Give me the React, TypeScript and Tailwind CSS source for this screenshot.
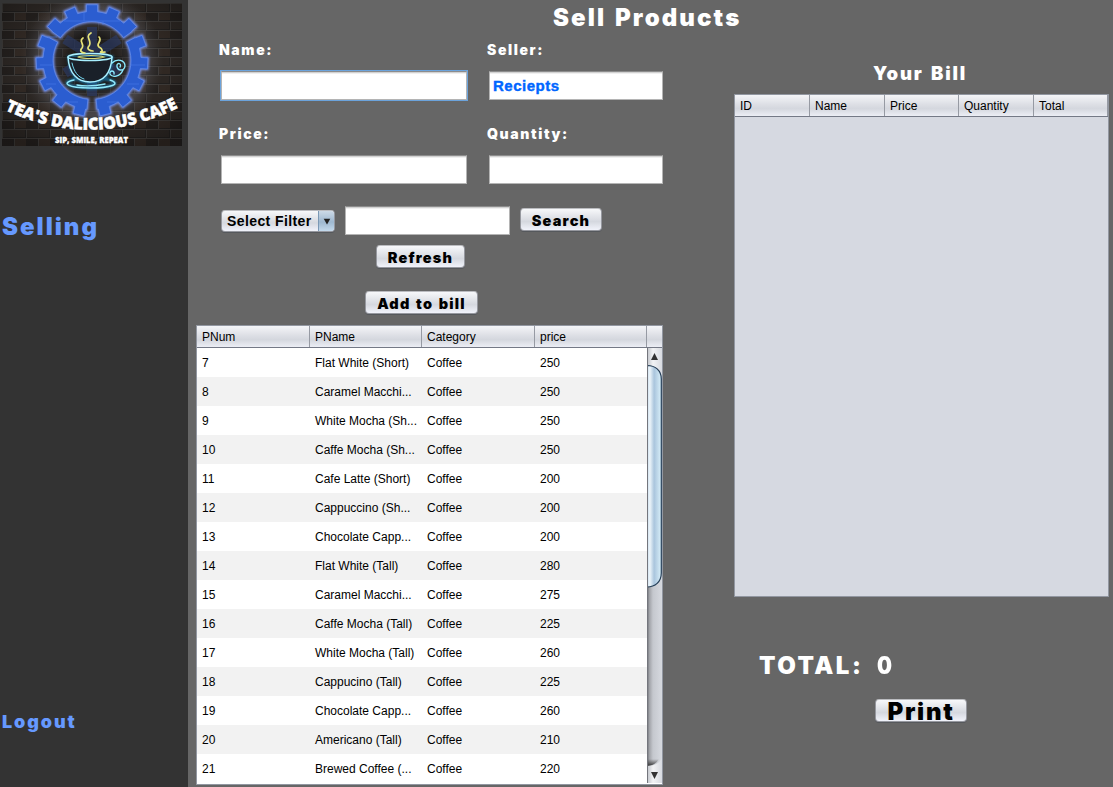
import React from "react";

const products: [string, string, string][] = [
  ["7", "Flat White (Short)", "250"],
  ["8", "Caramel Macchi...", "250"],
  ["9", "White Mocha (Sh...", "250"],
  ["10", "Caffe Mocha (Sh...", "250"],
  ["11", "Cafe Latte (Short)", "200"],
  ["12", "Cappuccino (Sh...", "200"],
  ["13", "Chocolate Capp...", "200"],
  ["14", "Flat White (Tall)", "280"],
  ["15", "Caramel Macchi...", "275"],
  ["16", "Caffe Mocha (Tall)", "225"],
  ["17", "White Mocha (Tall)", "260"],
  ["18", "Cappucino (Tall)", "225"],
  ["19", "Chocolate Capp...", "260"],
  ["20", "Americano (Tall)", "210"],
  ["21", "Brewed Coffee (...", "220"],
];

const point = (r: number, deg: number) => {
  const a = (deg * Math.PI) / 180;
  return `${(90 + r * Math.sin(a)).toFixed(2)} ${(57.5 - r * Math.cos(a)).toFixed(2)}`;
};

// One segment of the gear: an inner arc with teeth along its outer edge.
const gearSegment = (from: number, to: number, teeth: number[]) => {
  const pts = [`M${point(39, from)}`, `L${point(49, from)}`];
  teeth.forEach((t) => {
    const a = Math.max(from, t - 6.5);
    const b = Math.min(to, t + 6.5);
    pts.push(`A49 49 0 0 1 ${point(49, a)}`, `L${point(56, a + 0.8)}`, `L${point(56, b - 0.8)}`, `L${point(49, b)}`);
  });
  pts.push(`A49 49 0 0 1 ${point(49, to)}`, `L${point(39, to)}`, `A39 39 0 0 0 ${point(39, from)}Z`);
  return pts.join(" ");
};

const segments = [
  gearSegment(-54, 54, [-47, -23.5, 0, 23.5, 47]),
  gearSegment(62, 174, [69, 93, 117, 141, 166]),
  gearSegment(186, 298, [194, 219, 243, 267, 291]),
];

function Logo() {
  return (
    <svg width="180" height="143" viewBox="0 0 180 143" className="block">
      <defs>
        <pattern id="bricks" width="24" height="18" patternUnits="userSpaceOnUse">
          <rect width="24" height="18" fill="#211f1e" />
          <rect x="1" y="1" width="22" height="7" fill="#2b2623" />
          <rect x="-11" y="10" width="22" height="7" fill="#231f1d" />
          <rect x="13" y="10" width="22" height="7" fill="#302823" />
          <path d="M0 .5H24M0 9.5H24M.5 0V9M12.500 9V18" stroke="#403c3a" strokeWidth=".9" />
        </pattern>
        <radialGradient id="halo">
          <stop offset=".35" stopColor="#111" stopOpacity=".4" />
          <stop offset=".75" stopColor="#8a8c9c" stopOpacity=".3" />
          <stop offset="1" stopColor="#555" stopOpacity="0" />
        </radialGradient>
        <radialGradient id="shade" cx=".5" cy=".45" r=".65">
          <stop offset=".65" stopColor="#000" stopOpacity="0" />
          <stop offset="1" stopColor="#000" stopOpacity=".25" />
        </radialGradient>
        <filter id="glow" x="-20%" y="-20%" width="140%" height="140%">
          <feGaussianBlur stdDeviation="1.3" />
        </filter>
        <path id="arc" d="M1 106 Q91 149 179.500 103" />
      </defs>
      <rect width="180" height="143" fill="url(#bricks)" />
      <circle cx="90" cy="58" r="72" fill="url(#halo)" />
      <rect width="180" height="143" fill="url(#shade)" />
      <g stroke="#2b3a66" strokeWidth="10" opacity=".65" fill="none">
        <path d="M90 24V93M63 36L117 70M117 36L63 70" />
      </g>
      {segments.map((d) => (
        <g key={d}>
          <path d={d} fill="none" stroke="#7890e8" strokeWidth="2.500" filter="url(#glow)" />
          <path d={d} fill="#2b5dd0" stroke="#5f8aee" strokeWidth=".8" />
        </g>
      ))}
      <path d="M43 34H55M38 62H50M44 81H54M65 99H76M105 99H116M125 81H137M129 62H143M62 18H118M82 9V18M101 18V22" stroke="#487be8" strokeWidth=".7" opacity=".8" />
      <g fill="none" strokeLinecap="round">
        <g stroke="#168bc7" strokeWidth="3" opacity=".65" filter="url(#glow)">
          <path d="M67 54C68 72 76 80 89 80C102 80 109 70 110 54Z" />
          <ellipse cx="89" cy="80" rx="24" ry="5" />
        </g>
        <path d="M66 54C67 70 75 79 88 79C102 79 109 70 110 54" stroke="#a8efff" strokeWidth="1.500" fill="#1a2029" />
        <ellipse cx="88" cy="54" rx="22" ry="3.500" stroke="#a8efff" strokeWidth="1.400" />
        <path d="M76 54C82 52 96 52 102 54C96 56 82 56 76 54" stroke="#d9d875" strokeWidth="1.200" />
        <path d="M70 60C72 69 76 74 82 76" stroke="#75d9f2" strokeWidth="1" />
        <path d="M72 77C58 80 66 85 88 85C109 85 120 81 108 77M75 82C86 84 93 83 103 81" stroke="#91e8fa" strokeWidth="1.400" />
        <path d="M110 60C115 55 123 57 123 63C122 69 114 68 115 62C116 59 120 61 118 64M121 67C118 74 110 75 108 71C107 67 113 67 112 71" stroke="#8ceaff" strokeWidth="1.400" />
        <g stroke="#e8e479" strokeWidth="1.700">
          <path d="M81 35C76 38 83 41 80 45C77 48 80 50 83 50" />
          <path d="M89 30C82 34 91 38 87 43C84 46 88 48 91 48" />
          <path d="M97 34C101 38 93 41 97 44C101 46 101 49 98 49C100 50 102 49 103 49" />
        </g>
      </g>
      <g fill="#fff" className="font-['Open_Sans','Liberation_Sans',sans-serif] font-extrabold" stroke="#fff">
        <text fontSize="16.500" strokeWidth=".5" textLength="180" lengthAdjust="spacingAndGlyphs">
          <textPath href="#arc" startOffset="2" textLength="180" lengthAdjust="spacingAndGlyphs">TEA'S DALICIOUS CAFE</textPath>
        </text>
        <text x="53" y="140" fontSize="8.500" strokeWidth=".3" textLength="73" lengthAdjust="spacingAndGlyphs">SIP, SMILE, REPEAT</text>
      </g>
    </svg>
  );
}

const fieldBase =
  "block h-[29px] border border-[#b4b4b4] border-t-[#8c8c8c] bg-white shadow-[inset_0_1px_0_#d2d2d2,inset_0_2px_0_#f0f0f0]";
const buttonBase =
  "flex shrink-0 items-center justify-center whitespace-nowrap rounded-[4px] border border-[#96989f] border-t-[#bbbcc0] bg-[linear-gradient(#f7f8fa,#e3e5ea_35%,#d5d8df_60%,#f1f3fb)] text-black shadow-[0_1px_0_#55585c]";
const heavy = "font-['Inter','Liberation_Sans',sans-serif] font-black";
const smallButton = `h-[23px] pt-[2px] text-[14.5px] leading-[21px] ${heavy}`;
const label = `block h-5 whitespace-nowrap text-[14px] leading-5 tracking-[1.6px] text-white ${heavy}`;
const headerFill = "bg-[linear-gradient(#f4f5f8,#dddfe5_45%,#d4d7de_65%,#eceef5)]";

function Sidebar() {
  return (
    <aside className="flex h-full w-[188px] shrink-0 flex-col bg-[#333333] pl-[2px] pt-[3px] text-[#6699ff]">
      <Logo />
      <div className={`mt-[66px] h-[30px] text-2xl leading-[30px] tracking-[2px] ${heavy}`}>Selling</div>
      <div className={`mt-[468px] h-6 text-[18px] leading-6 tracking-[1.9px] ${heavy}`}>Logout</div>
    </aside>
  );
}

function ScrollBar() {
  return (
    <svg width="15" height="435" viewBox="0 0 15 435" className="block shrink-0">
      <defs>
        <linearGradient id="track">
          <stop stopColor="#686a70" />
          <stop offset=".17" stopColor="#a3a5aa" />
          <stop offset=".4" stopColor="#c5c8ce" />
          <stop offset="1" stopColor="#d6d9df" />
        </linearGradient>
        <linearGradient id="thumb">
          <stop stopColor="#c8dced" />
          <stop offset=".2" stopColor="#edf5fa" />
          <stop offset=".5" stopColor="#aac5dd" />
          <stop offset="1" stopColor="#d9f0fa" />
        </linearGradient>
        <linearGradient id="arrow">
          <stop stopColor="#bfc2c8" />
          <stop offset=".4" stopColor="#f2f3f5" />
          <stop offset="1" stopColor="#d7dae0" />
        </linearGradient>
        <linearGradient id="pit" x2="0" y2="1">
          <stop stopColor="#444" stopOpacity="0" />
          <stop offset="1" stopColor="#333" />
        </linearGradient>
      </defs>
      <rect width="15" height="435" fill="url(#track)" />
      <path d="M0 0H15V29Q12 17 0 17Z" fill="url(#arrow)" />
      <path d="M7.500 5L11 12H4Z" fill="#323232" />
      <path d="M0 17.500C8 17.500 14.300 22 14.300 31V225C14.300 234 8 239 0 239Z" fill="url(#thumb)" stroke="#263f58" strokeWidth="1.200" />
      <path d="M0 411H12Q9 417 0 418Z" fill="url(#pit)" />
      <path d="M0 418Q11 418 15 410V435H0Z" fill="url(#arrow)" />
      <path d="M4 424H11L7.500 431Z" fill="#323232" />
      <path d="M.5 0V435" stroke="#74767d" strokeWidth="1" />
    </svg>
  );
}

function ProductTable() {
  return (
    <div className="ml-2 mt-[11px] h-[460px] w-[467px] border border-[#9297a1] bg-white text-xs text-black">
      <div className={`flex h-[22px] border-b border-[#747986] leading-[23px] ${headerFill}`}>
        {["PNum", "PName", "Category", "price"].map((name, i) => (
          <div key={name} className={`${i % 2 === 0 ? "w-[113px]" : "w-[112px]"} h-[21px] shrink-0 border-r border-[#969aa3] pl-[5px]`}>
            {name}
          </div>
        ))}
        <div className="flex-1" />
      </div>
      <div className="flex h-[436px] overflow-hidden">
        <div className="w-[450px] shrink-0">
          {products.map(([num, name, price], i) => (
            <div key={num} className={`flex h-[29px] whitespace-nowrap leading-[31px] ${i % 2 ? "bg-[#f2f2f2]" : "bg-white"}`}>
              <div className="w-[113px] pl-[5px]">{num}</div>
              <div className="w-[112px] pl-[5px]">{name}</div>
              <div className="w-[113px] pl-[5px]">Coffee</div>
              <div className="w-[112px] pl-[5px]">{price}</div>
            </div>
          ))}
        </div>
        <ScrollBar />
      </div>
    </div>
  );
}

function ProductForm() {
  return (
    <section className="flex w-[475px] shrink-0 flex-col">
      <div className="mt-[5px] flex pl-[31px]">
        <div className="w-[268px]"><label className={label}>Name:</label></div>
        <label className={label}>Seller:</label>
      </div>
      <div className="mt-[11px] flex pl-[33px]">
        <div className={`${fieldBase} w-[246px] outline-[1.5px] outline-solid outline-[#6ba3dc]`} />
        <div className={`${fieldBase} ml-[22px] w-[174px] pl-[3px] text-[15px] font-bold leading-[28px] tracking-[0.5px] text-[#0066ff] [-webkit-text-stroke:0.4px_#0066ff]`}>
          Reciepts
        </div>
      </div>
      <div className="mt-6 flex pl-[31px]">
        <div className="w-[268px]"><label className={label}>Price:</label></div>
        <label className={label}>Quantity:</label>
      </div>
      <div className="mt-[11px] flex pl-[33px]">
        <div className={`${fieldBase} w-[246px]`} />
        <div className={`${fieldBase} ml-[22px] w-[174px]`} />
      </div>
      <div className="mt-[22px] flex h-[29px] pl-[33px]">
        <div className={`${buttonBase} mt-1 h-[22px] w-[114px] !justify-start pl-[5px] text-sm font-bold leading-[20px] tracking-[0.4px]`}>
          <span className="w-[91px] shrink-0">Select Filter</span>
          <span className="flex h-full flex-1 items-center justify-center rounded-r-[3px] border-l border-[#7b98b5] bg-[linear-gradient(#cddae7,#9eb8d0_55%,#c4daed)]">
            <svg width="8" height="7" viewBox="0 0 8 7"><path d="M.7 .7H7.300L4 6.500Z" fill="#222" /></svg>
          </span>
        </div>
        <div className={`${fieldBase} ml-[10px] w-[165px]`} />
        <button className={`${buttonBase} ${smallButton} ml-[10px] mt-[2px] w-[82px] tracking-[1.2px]`}>Search</button>
      </div>
      <button className={`${buttonBase} ${smallButton} ml-[188px] mt-[10px] w-[89px] tracking-[1.2px]`}>Refresh</button>
      <button className={`${buttonBase} ${smallButton} ml-[177px] mt-[23px] w-[113px] tracking-[1.2px] [word-spacing:1.5px]`}>Add to bill</button>
      <ProductTable />
    </section>
  );
}

function Bill() {
  return (
    <section className="ml-[71px] flex w-[375px] shrink-0 flex-col">
      <h2 className={`ml-[139px] mt-[26px] h-6 text-[18.5px] leading-6 tracking-[1.8px] text-white [word-spacing:2px] ${heavy}`}>Your Bill</h2>
      <div className="mt-[9px] h-[503px] border border-[#9297a1] bg-[#d6d9e1] text-xs text-black">
        <div className={`flex h-[22px] border-b border-[#747986] leading-[22.5px] ${headerFill}`}>
          {["ID", "Name", "Price", "Quantity", "Total"].map((name, i) => (
            <div key={name} className={`${i === 2 || i === 4 ? "w-[74px]" : "w-[75px]"} h-[21px] shrink-0 border-r border-[#969aa3] pl-[5px]`}>
              {name}
            </div>
          ))}
        </div>
      </div>
      <div className={`ml-[25px] mt-[54px] flex h-[30px] text-2xl leading-[30px] text-white ${heavy}`}>
        <span className="w-[118px] tracking-[2.5px]">TOTAL:</span>
        <span className="w-[17px] origin-left scale-x-[.88]">0</span>
      </div>
      <button className={`${buttonBase} ${heavy} ml-[141px] mt-[18px] h-[23px] w-[92px] pt-[3px] text-2xl leading-5 tracking-[1.7px]`}>
        Print
      </button>
    </section>
  );
}

export default function App() {
  return (
    <div className="flex h-[787px] w-[1113px] overflow-hidden bg-[#666666] font-['Liberation_Sans',Arial,sans-serif]">
      <Sidebar />
      <main className="flex min-w-0 flex-1 flex-col">
        <h1 className={`h-[35px] shrink-0 pl-[365px] text-2xl leading-[35px] tracking-[2.1px] text-white [word-spacing:2px] ${heavy}`}>Sell Products</h1>
        <div className="flex">
          <ProductForm />
          <Bill />
        </div>
      </main>
    </div>
  );
}
